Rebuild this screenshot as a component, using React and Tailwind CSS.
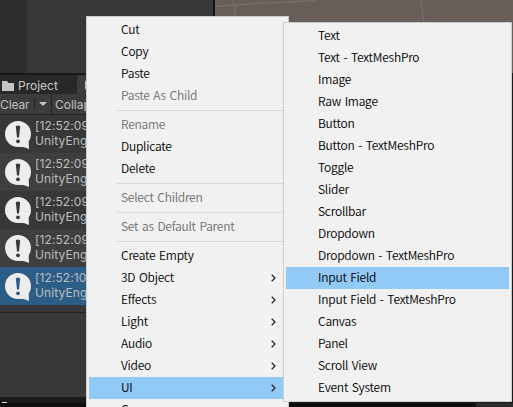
const uiFont = "font-['Inter','Liberation_Sans',sans-serif]";
const menuFont = "font-['Noto_Sans_CJK_KR','Noto_Sans',sans-serif] font-[350]";

const mainMenu = [
  { t: "Cut" },
  { t: "Copy" },
  { t: "Paste" },
  { t: "Paste As Child", off: true },
  null,
  { t: "Rename", off: true },
  { t: "Duplicate" },
  { t: "Delete" },
  null,
  { t: "Select Children", off: true },
  null,
  { t: "Set as Default Parent", off: true },
  null,
  { t: "Create Empty" },
  { t: "3D Object", sub: true },
  { t: "Effects", sub: true },
  { t: "Light", sub: true },
  { t: "Audio", sub: true },
  { t: "Video", sub: true },
  { t: "UI", sub: true, on: true },
  { t: "Camera" },
];

const subMenu = [
  "Text", "Text - TextMeshPro", "Image", "Raw Image", "Button", "Button - TextMeshPro",
  "Toggle", "Slider", "Scrollbar", "Dropdown", "Dropdown - TextMeshPro", "Input Field",
  "Input Field - TextMeshPro", "Canvas", "Panel", "Scroll View", "Event System",
].map((t) => ({ t, on: t === "Input Field" }));

const logs = ["[12:52:09]", "[12:52:09]", "[12:52:09]", "[12:52:09]", "[12:52:10]"];

function Item({ item }) {
  if (!item) {
    return (
      <div className="flex h-[7px] items-center pl-[28px]">
        <div className="h-px w-full bg-[#d7d7d7]" />
      </div>
    );
  }
  return (
    <div
      className={`flex h-[22px] shrink-0 items-center pl-[32px] text-[12px] leading-[20px] tracking-[-0.23px] whitespace-nowrap [word-spacing:1.2px] ${
        item.on ? "bg-[#91c9f7]" : ""
      } ${item.off ? "text-[#6d6d6d]" : "text-black"}`}
    >
      <span className="flex-1 pb-[2px]">{item.t}</span>
      {item.sub && (
        <svg className="mr-[7px] h-[8px] w-[5px]" viewBox="0 0 5 8" fill="none">
          <path d="M0.7 0.8L4 4L0.7 7.2" stroke="#222" strokeWidth="1.2" />
        </svg>
      )}
    </div>
  );
}

function LogIcon() {
  return (
    <svg className="mt-[6px] ml-[5px] h-[28px] w-[27px]" viewBox="0 0 27 28">
      <circle cx="13" cy="13" r="13" fill="#ededed" />
      <path d="M14 25.8C18.5 25.5 21.5 27 24 28L23.5 17Z" fill="#ededed" />
      <path d="M10.8 5.2Q13 3.8 15.2 5.2L14 16.5H12Z" fill="currentColor" />
      <circle cx="13" cy="20.3" r="1.9" fill="currentColor" />
    </svg>
  );
}

export default function App() {
  return (
    <div className={`relative flex h-[407px] w-[513px] flex-col overflow-hidden bg-[#383838] ${uiFont}`}>
      <div className="flex h-[397px]">
        <div className="flex w-[213px] flex-col overflow-hidden">
          <div className="flex h-[73px] shrink-0">
            <div className="w-[27px] bg-[#2d2d2d]" />
            <div className="flex-1 bg-[#383838]" />
          </div>
          <div className="h-[2px] shrink-0 bg-[#191919]" />
          <div className="flex h-[19px] shrink-0 bg-[#282828] text-[12px] text-[#c8c8c8]">
            <div className="flex w-[77px] items-center pt-[2px]">
              <svg className="ml-[2px] h-[10px] w-[12px]" viewBox="0 0 12 10">
                <path d="M0 0H5L6.5 2H12V10H0Z" fill="#c4c4c4" />
              </svg>
              <span className="ml-[4px]">Project</span>
            </div>
            <div className="flex flex-1 items-center rounded-tl-[2px] bg-[#3c3c3c] pl-[8px]">
              <div className="h-[10px] w-[10px] rounded-[2px] bg-[#c4c4c4]" />
            </div>
          </div>
          <div className="flex h-[20px] shrink-0 items-center bg-[#3c3c3c] text-[12px] text-[#c0c0c0]">
            <span className="w-[34px] pt-px tracking-[-0.1px]">Clear</span>
            <div className="h-[12px] w-px bg-[#232323]" />
            <svg className="ml-[4px] h-[4px] w-[8px]" viewBox="0 0 8 4">
              <path d="M0 0H8L4 4Z" fill="#c4c4c4" />
            </svg>
            <div className="ml-[4px] h-[20px] w-px bg-[#232323]" />
            <span className="ml-[3px] pt-px">Collapse</span>
          </div>
          <div className="h-px shrink-0 bg-[#232323]" />
          {logs.map((time, i) => (
            <div
              key={i}
              className={`flex h-[38px] shrink-0 text-[12px] leading-[15px] tracking-[0.1px] ${
                i === 4 ? "bg-[#2c5d87]" : i % 2 ? "bg-[#3f3f3f]" : "bg-[#383838]"
              }`}
            >
              <div className={`w-[32px] shrink-0 ${i === 4 ? "text-[#2c5d87]" : "text-[#383838]"}`}>
                <LogIcon />
              </div>
              <div className="ml-[3px] pt-[3px] text-[#bdbdbd]">
                <div>{time}</div>
                <div>UnityEngine</div>
              </div>
            </div>
          ))}
          <div className="h-[7px] shrink-0" />
          <div className="h-px shrink-0 bg-[#232323]" />
        </div>
        <div className="w-[2px] bg-[#151515]" />
        <div className="flex-1 bg-[#191919]">
          <svg className="block h-[73px] w-[298px] bg-[#675e59]" viewBox="0 0 298 73" fill="none" stroke="#77736f">
            <path d="M0 6.5L40 3.5L100 0.5" />
            <path d="M18 0L21 16" />
            <path d="M205.500 0L209 22" />
            <path d="M0 13L298 3M92 16L89 0M150 22L145 0M268 22L258 0" stroke="#6b635e" />
          </svg>
        </div>
      </div>
      <div className="flex h-[6px] items-end bg-[#191919] pl-[2px]">
        <div className="h-px w-[5px] bg-[#d8d8d8]" />
      </div>
      <div className="flex h-[4px] justify-end bg-[#0e0e0e]">
        <div className="w-[37px] bg-[#2b2b2b]" />
      </div>

      <div className={`absolute top-[16px] left-[86px] h-[400px] w-[203px] border border-[#cccccc] bg-[#f1f1f1] p-[2px] ${menuFont}`}>
        <div className="w-[194px]">
          {mainMenu.map((item, i) => (
            <Item key={i} item={item} />
          ))}
        </div>
      </div>
      <div className={`absolute top-[22px] left-[283px] h-[380px] w-[229px] border border-[#cccccc] bg-[#f1f1f1] p-[2px] ${menuFont}`}>
        {subMenu.map((item, i) => (
          <Item key={i} item={item} />
        ))}
      </div>
    </div>
  );
}
